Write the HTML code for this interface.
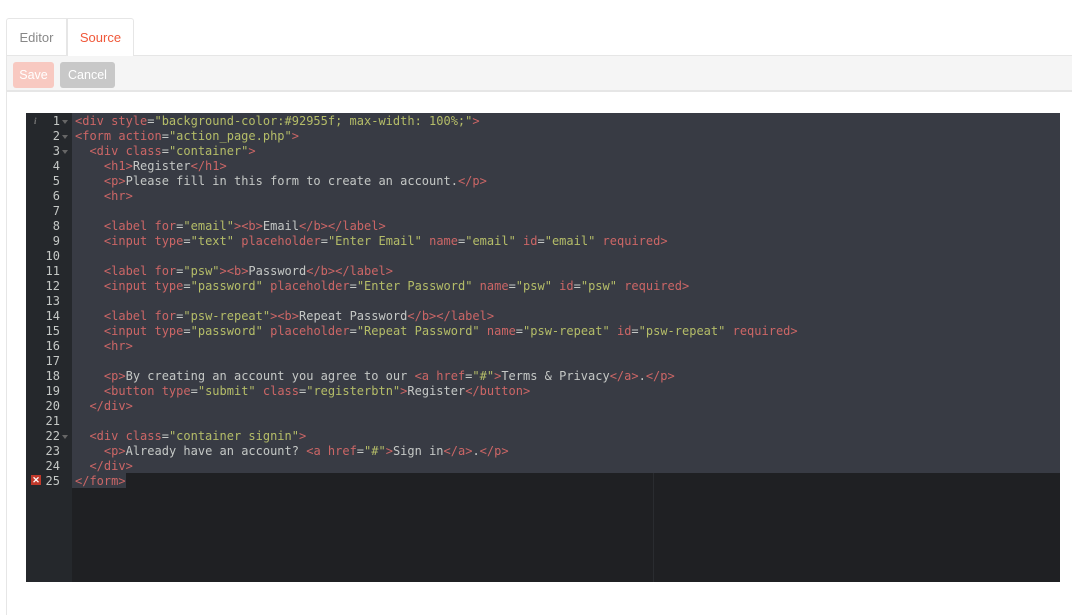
<!DOCTYPE html>
<html><head><meta charset="utf-8"><style>
*{margin:0;padding:0;box-sizing:border-box}
body{width:1072px;height:594px;background:#fff;font-family:"Liberation Sans",sans-serif;position:relative;overflow:hidden}
.tab{position:absolute;top:18px;height:38px;font-size:13px;line-height:37px;text-align:center}
#ed{left:6px;width:61px;color:#888;border:1px solid #e6e6e6;border-bottom:none;border-radius:3px 0 0 0}
#src{left:67px;width:67px;color:#f0583a;border:1px solid #e6e6e6;border-bottom:none;background:#fff;border-radius:0 3px 0 0}
#panel{position:absolute;left:6px;top:55px;width:1080px;height:560px;border-left:1px solid #e6e6e6;border-top:1px solid #e6e6e6}
#bar{position:absolute;left:7px;top:56px;width:1080px;height:36px;background:#f5f5f5;border-bottom:2px solid #e6e6e6}
.btn{position:absolute;top:62px;height:26px;border-radius:3px;color:#fff;font-size:12.5px;line-height:26px;text-align:center}
#save{left:13px;width:41px;background:#f8c9c1}
#cancel{left:60px;width:55px;background:#c8c8c8}
#edit{position:absolute;left:26px;top:113px;width:1034px;height:469px;background:#1f2023}
#gut{position:absolute;left:0;top:0;width:46px;height:469px;background:#25282c}
#sel{position:absolute;left:46px;top:0;width:988px;height:360px;background:#383b44}
#sel2{position:absolute;left:46px;top:360px;width:54px;height:15px;background:#383b44}
#margin{position:absolute;left:627px;top:360px;width:1px;height:109px;background:#2a2c30}
pre{position:absolute;top:1px;font-family:"DejaVu Sans Mono","Liberation Mono",monospace;font-size:12px;line-height:15px}
#nums{left:0;width:34px;text-align:right;color:#c5c8c6}
#code{left:49px;color:#c5c8c6}
.t{color:#cc6666}.s{color:#b5bd68}
.fold{position:absolute;left:36px;width:0;height:0;border-left:3px solid transparent;border-right:3px solid transparent;border-top:4px solid #666}
#info{position:absolute;left:8px;top:3px;color:#777;font:bold italic 9px "Liberation Serif",serif}
#err{position:absolute;left:5px;top:362px;width:10px;height:10px;background:#c0392b;color:#fff;font:bold 9px/10px "Liberation Sans",sans-serif;text-align:center}
</style></head><body>
<div id="panel"></div>
<div id="bar"></div>
<div class="tab" id="ed">Editor</div>
<div class="tab" id="src">Source</div>
<div class="btn" id="save">Save</div>
<div class="btn" id="cancel">Cancel</div>
<div id="edit">
<div id="gut"></div>
<div id="sel"></div><div id="sel2"></div><div id="margin"></div>
<div id="info">i</div>
<div class="fold" style="top:7px"></div><div class="fold" style="top:22px"></div><div class="fold" style="top:37px"></div><div class="fold" style="top:322px"></div>
<div id="err">✕</div>
<pre id="nums">1
2
3
4
5
6
7
8
9
10
11
12
13
14
15
16
17
18
19
20
21
22
23
24
25</pre>
<pre id="code"><span class="t">&lt;div style</span>=<span class="s">"background-color:#92955f; max-width: 100%;"</span><span class="t">&gt;</span>
<span class="t">&lt;form action</span>=<span class="s">"action_page.php"</span><span class="t">&gt;</span>
  <span class="t">&lt;div class</span>=<span class="s">"container"</span><span class="t">&gt;</span>
    <span class="t">&lt;h1&gt;</span>Register<span class="t">&lt;/h1&gt;</span>
    <span class="t">&lt;p&gt;</span>Please fill in this form to create an account.<span class="t">&lt;/p&gt;</span>
    <span class="t">&lt;hr&gt;</span>

    <span class="t">&lt;label for</span>=<span class="s">"email"</span><span class="t">&gt;&lt;b&gt;</span>Email<span class="t">&lt;/b&gt;&lt;/label&gt;</span>
    <span class="t">&lt;input type</span>=<span class="s">"text"</span> <span class="t">placeholder</span>=<span class="s">"Enter Email"</span> <span class="t">name</span>=<span class="s">"email"</span> <span class="t">id</span>=<span class="s">"email"</span> <span class="t">required&gt;</span>

    <span class="t">&lt;label for</span>=<span class="s">"psw"</span><span class="t">&gt;&lt;b&gt;</span>Password<span class="t">&lt;/b&gt;&lt;/label&gt;</span>
    <span class="t">&lt;input type</span>=<span class="s">"password"</span> <span class="t">placeholder</span>=<span class="s">"Enter Password"</span> <span class="t">name</span>=<span class="s">"psw"</span> <span class="t">id</span>=<span class="s">"psw"</span> <span class="t">required&gt;</span>

    <span class="t">&lt;label for</span>=<span class="s">"psw-repeat"</span><span class="t">&gt;&lt;b&gt;</span>Repeat Password<span class="t">&lt;/b&gt;&lt;/label&gt;</span>
    <span class="t">&lt;input type</span>=<span class="s">"password"</span> <span class="t">placeholder</span>=<span class="s">"Repeat Password"</span> <span class="t">name</span>=<span class="s">"psw-repeat"</span> <span class="t">id</span>=<span class="s">"psw-repeat"</span> <span class="t">required&gt;</span>
    <span class="t">&lt;hr&gt;</span>

    <span class="t">&lt;p&gt;</span>By creating an account you agree to our <span class="t">&lt;a href</span>=<span class="s">"#"</span><span class="t">&gt;</span>Terms &amp; Privacy<span class="t">&lt;/a&gt;</span>.<span class="t">&lt;/p&gt;</span>
    <span class="t">&lt;button type</span>=<span class="s">"submit"</span> <span class="t">class</span>=<span class="s">"registerbtn"</span><span class="t">&gt;</span>Register<span class="t">&lt;/button&gt;</span>
  <span class="t">&lt;/div&gt;</span>

  <span class="t">&lt;div class</span>=<span class="s">"container signin"</span><span class="t">&gt;</span>
    <span class="t">&lt;p&gt;</span>Already have an account? <span class="t">&lt;a href</span>=<span class="s">"#"</span><span class="t">&gt;</span>Sign in<span class="t">&lt;/a&gt;</span>.<span class="t">&lt;/p&gt;</span>
  <span class="t">&lt;/div&gt;</span>
<span class="t">&lt;/form&gt;</span></pre>
</div>
</body></html>
